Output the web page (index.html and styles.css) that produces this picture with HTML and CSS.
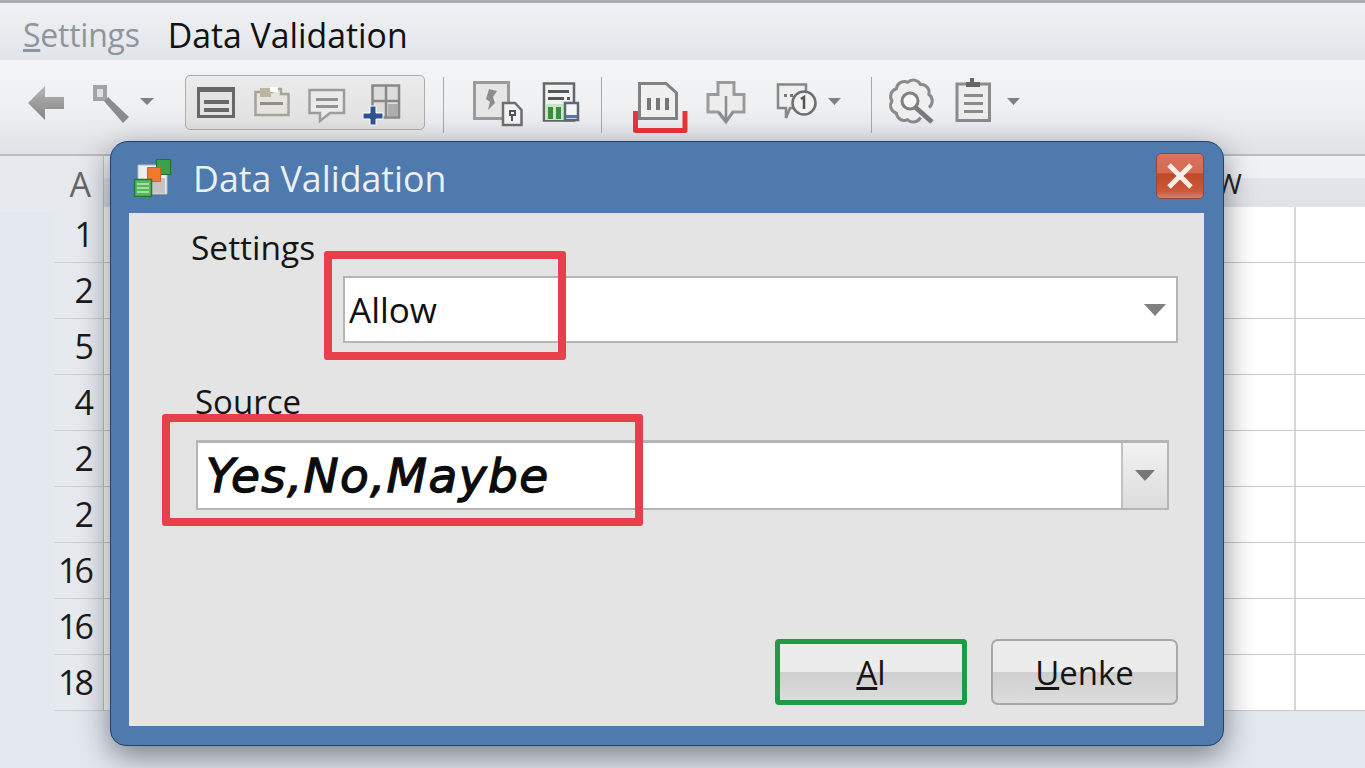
FILE: index.html
```html
<!DOCTYPE html>
<html lang="en">
<head>
<meta charset="utf-8">
<title>Data Validation</title>
<link rel="stylesheet" href="styles.css">
</head>
<body>
<div class="strip"></div>
<header class="menubar">
  <span class="menu-item menu-muted"><u>S</u>ettings</span>
  <span class="menu-item menu-active">Data Validation</span>
</header>
<nav class="toolbar">
  <svg class="ic" width="62" height="60" viewBox="20 75 62 60"><defs><linearGradient id="ga" x1="0" y1="0" x2="0" y2="1"><stop offset="0" stop-color="#b5b5b5"/><stop offset="1" stop-color="#858585"/></linearGradient></defs><path fill="url(#ga)" d="M28 103 45 86V97H64V109H45V120Z"/></svg>
  <svg class="ic" width="52" height="60" viewBox="82 75 52 60"><path fill="#e0e0e0" stroke="#a3a3a3" stroke-width="4" d="M95 87H105V99H95Z"/><path fill="#8c8c8c" d="M104 101 108 97 129 117 123 123Z"/></svg>
  <svg class="ic" width="51" height="60" viewBox="134 75 51 60"><path fill="#808080" d="M140 98H154L147 105Z"/></svg>
  <div class="group">
    <svg class="ic-g" width="59" height="53" viewBox="186 76 59 53"><path fill="#e3e3e3" stroke="#686868" stroke-width="3" d="M198.500 90H233.500V116.500H198.500Z"/><path fill="#686868" d="M197 87H235V92H197ZM204 100H229V104H204ZM204 108H229V112H204Z"/></svg>
    <svg class="ic-g" width="55" height="53" viewBox="245 76 55 53"><path fill="#e6e4df" stroke="#a5a39c" stroke-width="2.500" d="M255.500 92H272V89H281V94H288.500V115H255.500Z"/><path fill="#bdb5a2" d="M260 88H271V97H260Z"/><path fill="#fff" d="M270 87H278V92H270Z"/><path fill="#8f8f8c" d="M260 102H283V105H260Z"/></svg>
    <svg class="ic-g" width="55" height="53" viewBox="300 76 55 53"><path fill="#ebebeb" stroke="#9c9c9c" stroke-width="2.500" d="M309.500 90H344V113H330L320 121V113H309.500Z"/><path fill="#929292" d="M316 98H338V101H316ZM316 105H338V108H316Z"/></svg>
    <svg class="ic-g" width="69" height="53" viewBox="355 76 69 53"><path fill="#dcdcdc" stroke="#888" stroke-width="2.500" d="M372.500 85.500H399V117.500H372.500Z"/><path fill="none" stroke="#888" stroke-width="2.500" d="M386 85V118M372 101H399"/><path fill="#adadad" d="M388 104H398V116H388Z"/><path fill="#2f5591" stroke="#fff" stroke-width="1" d="M370 106H376V113H383V119H376V125H370V119H363V113H370Z"/></svg>
  </div>
  <div class="sep sep-a"></div>
  <svg class="ic" width="83" height="60" viewBox="444 75 83 60"><path fill="#e6e6e6" stroke="#9a9a9a" stroke-width="3" d="M474.500 82.500H508.500V118.500H474.500Z"/><path fill="#8c8c8c" d="M489 89 497 91 493 97 495 103 488 110 490 102 486 99Z"/><path fill="#f3f3f3" stroke="#6f6f6f" stroke-width="2.500" d="M503 103H515L521.500 110V125H503Z"/><path fill="none" stroke="#555" stroke-width="2" d="M510 111H515V115H510ZM512 115V121"/></svg>
  <svg class="ic" width="63" height="60" viewBox="527 75 63 60"><path fill="#f1f1f1" stroke="#62686a" stroke-width="2.500" d="M544 83.500H574V120.500H544Z"/><path fill="#555" d="M548 90H569V93H548ZM548 97H564V100H548ZM567 97H570V100H567Z"/><path fill="#c9e5c7" d="M545 104H564V120H545Z"/><path fill="#3c8d3d" d="M548 107H553V119H548ZM556 107H561V119H556Z"/><path fill="#f3f5f6" stroke="#5c6a75" stroke-width="2.500" d="M565 103H578V120H565Z"/><path fill="#4e7aad" d="M566 115H577V118H566Z"/></svg>
  <div class="sep sep-b"></div>
  <svg class="ic" width="93" height="60" viewBox="602 75 93 60"><path fill="#f0f0f0" stroke="#828282" stroke-width="3" d="M639.500 83.500H666L676.500 93V118.500H639.500Z"/><path fill="#767676" d="M647 98H651V110H647ZM656 98H660V110H656ZM665 98H669V110H665Z"/><path fill="none" stroke="#e8343b" stroke-width="5" stroke-linejoin="round" d="M635.500 111V130.500H685V111"/></svg>
  <svg class="ic" width="65" height="60" viewBox="695 75 65 60"><path fill="#ededed" stroke="#9b9b9b" stroke-width="3" d="M718 82.500H734V94.500H744V112H733L726 122 718 112H708V94.500H718Z"/><path fill="none" stroke="#8c8c8c" stroke-width="2.500" d="M726 96V121M719 112 726 121 733 112"/></svg>
  <svg class="ic" width="90" height="60" viewBox="760 75 90 60"><path fill="#efefef" stroke="#868686" stroke-width="2.500" d="M778 84.500H806V108H790L786 118V108H778Z"/><path fill="#777" d="M784 94H787V97H784ZM790 94H793V97H790Z"/><circle cx="804" cy="103" r="11.500" fill="#f1f1f1" stroke="#6f6f6f" stroke-width="2.500"/><path fill="none" stroke="#555" stroke-width="2.500" d="M801 99 804 97V109"/><path fill="#808080" d="M828 98H841L834.500 105Z"/></svg>
  <div class="sep sep-c"></div>
  <svg class="ic" width="73" height="60" viewBox="872 75 73 60"><path fill="#efefef" stroke="#8a8a8a" stroke-width="3" d="M920.500 117.500A8 8 0 0 1 907.700 119.700A8 8 0 0 1 896.400 113.200A8 8 0 0 1 892 101A8 8 0 0 1 896.400 88.800A8 8 0 0 1 907.700 82.300A8 8 0 0 1 920.500 84.500A8 8 0 0 1 928.900 94.500A8 8 0 0 1 928.900 107.500"/><circle cx="910" cy="101" r="8" fill="#f7f7f7" stroke="#808080" stroke-width="3"/><path stroke="#7b7b7b" stroke-width="5" d="M915 107 932 122"/></svg>
  <svg class="ic" width="85" height="60" viewBox="945 75 85 60"><path fill="#ededed" stroke="#8b8b8b" stroke-width="3" d="M957 84H989.500V120.500H957Z"/><path fill="#666" d="M966 82H970V78H974V82H980V87H966Z"/><path fill="#8a8a8a" d="M964 94H983V97H964ZM964 102H983V105H964ZM964 110H983V113H964Z"/><path fill="#808080" d="M1007 98H1020L1013.500 105Z"/></svg>
</nav>
<main class="sheet">
  <div class="sheet-head">
    <div class="head-gutter"></div>
    <div class="head-corner">A</div>
    <div class="head-col"></div>
    <div class="head-col head-w">W</div>
    <div class="head-col"></div>
  </div>
  <div class="sheet-row"><div class="row-num">1</div><div class="cell"></div><div class="cell cell-last"></div></div>
  <div class="sheet-row"><div class="row-num">2</div><div class="cell"></div><div class="cell cell-last"></div></div>
  <div class="sheet-row"><div class="row-num">5</div><div class="cell"></div><div class="cell cell-last"></div></div>
  <div class="sheet-row"><div class="row-num">4</div><div class="cell"></div><div class="cell cell-last"></div></div>
  <div class="sheet-row"><div class="row-num">2</div><div class="cell"></div><div class="cell cell-last"></div></div>
  <div class="sheet-row"><div class="row-num">2</div><div class="cell"></div><div class="cell cell-last"></div></div>
  <div class="sheet-row"><div class="row-num">16</div><div class="cell"></div><div class="cell cell-last"></div></div>
  <div class="sheet-row"><div class="row-num">16</div><div class="cell"></div><div class="cell cell-last"></div></div>
  <div class="sheet-row"><div class="row-num">18</div><div class="cell"></div><div class="cell cell-last"></div></div>
</main>
<section class="dialog" aria-label="Data Validation">
  <div class="titlebar">
    <svg class="title-icon" width="38" height="39" viewBox="134 158 38 39"><path fill="#ededed" stroke="#b9b9b9" d="M139 165H168V194H139Z"/><path fill="#a9a9a9" d="M153 178H166V193H153Z" opacity=".6"/><path fill="#3da04a" stroke="#1f6d31" d="M157.500 159.500H171.500V174.500H157.500Z"/><path fill="#ee7a2a" stroke="#d75f17" d="M148.500 167.500H161.500V181.500H148.500Z"/><path fill="#58b85c" stroke="#1f7a36" stroke-width="1.500" d="M135.500 179.500H152.500V196.500H135.500Z"/><path stroke="#bfe6bd" stroke-width="1.500" d="M138 184H150M138 188H150M138 192H150"/></svg>
    <span class="title-text">Data Validation</span>
    <button class="close" aria-label="Close"><svg width="28" height="28" viewBox="0 0 28 28"><path stroke="#fbeee8" stroke-width="5" d="M3 3 25 25M25 3 3 25"/></svg></button>
  </div>
  <div class="panel">
    <div class="label label-settings">Settings</div>
    <div class="field field-allow"><span class="field-text">Allow</span><svg class="caret" width="22" height="12" viewBox="0 0 22 12"><path fill="#808080" d="M0 0H22L11 12Z"/></svg></div>
    <div class="label label-source">Source</div>
    <div class="field field-source"><span class="source-text">Yes,No,Maybe</span><div class="drop-btn"><svg width="20" height="11" viewBox="0 0 20 11"><path fill="#777" d="M0 0H20L10 11Z"/></svg></div></div>
    <div class="buttons">
      <button class="btn btn-ok"><u>A</u>l</button>
      <button class="btn btn-cancel"><u>U</u>enke</button>
    </div>
    <div class="mark mark-allow"></div>
    <div class="mark mark-source"></div>
  </div>
</section>
</body>
</html>
```
FILE: styles.css
```css
* { box-sizing: border-box; }
html, body { margin: 0; height: 768px; overflow: hidden; }
body {
  position: relative;
  width: 1365px;
  font-family: "Open Sans", "Noto Sans", sans-serif;
  color: #111;
  background: #e3e7ee;
}
.strip { height: 3px; background: #a9aeb6; }
.menubar {
  height: 57px;
  display: flex;
  align-items: center;
  gap: 28px;
  padding: 6px 0 0 23px;
  background: linear-gradient(#f0f1f4, #e1e5ea);
}
.menu-item { line-height: 44px; }
.menu-muted { font-size: 32px; letter-spacing: -.25px; color: #8f959c; }
.menu-active { font-size: 33.800px; }
.toolbar {
  height: 96px;
  display: flex;
  align-items: flex-start;
  padding: 15px 0 0 20px;
  background: linear-gradient(#f3f4f6 0, #eff0f2 50%, #dfe2e6 100%);
  border-bottom: 2px solid #b9bdc3;
}
.ic, .ic-g { display: block; flex: none; }
.group {
  display: flex;
  width: 240px;
  height: 55px;
  border: 1px solid #adadad;
  border-radius: 5px;
  background: linear-gradient(#ebebeb, #e0e0e0);
}
.sep { width: 1px; height: 56px; margin-top: 2px; background: #a6a8ab; flex: none; }
.sep-a { margin-left: 18px; }
.sep-b { margin-left: 11px; }
.sep-c { margin-left: 21px; }
.sheet { display: flex; flex-direction: column; }
.sheet-head {
  display: grid;
  grid-template-columns: 55px 49px 1108px 83px 70px;
  height: 51px;
  border-bottom: 2px solid #c3c7cd;
}
.head-gutter { background: #e6e9ee; }
.head-corner {
  font-size: 34px;
  line-height: 56px;
  text-align: right;
  padding-right: 12px;
  color: #666;
  background: #e6e9ee;
  border-right: 1px solid #c3c6cb;
}
.head-col { background: linear-gradient(#eff1f3 0, #eff1f3 40%, #e2e5ea 40%, #dfe2e7 100%); }
.head-w { font-size: 28px; line-height: 54px; padding-left: 4px; color: #222; }
.sheet-row {
  display: grid;
  grid-template-columns: 49px 1192px 69px;
  height: 56px;
  margin-left: 55px;
  border-bottom: 2px solid #c8ccd2;
}
.row-num {
  font-size: 34px;
  line-height: 55px;
  letter-spacing: -3px;
  text-align: right;
  padding-right: 12px;
  color: #1a1a1a;
  background: #e6e9ee;
  border-right: 1px solid #bfc2c7;
}
.cell { background: #fff; border-right: 2px solid #d6d6d6; }
.cell-last { border-right: 0; }
.dialog {
  position: absolute;
  left: 110px;
  top: 141px;
  width: 1114px;
  height: 605px;
  display: flex;
  flex-direction: column;
  padding: 0 19px 19px 18px;
  border: 1.500px solid #1f426f;
  border-radius: 18px 18px 16px 16px;
  background: #4e7aad;
  box-shadow: 0 10px 30px rgba(15, 20, 30, .5);
}
.titlebar {
  height: 71px;
  flex: none;
  display: flex;
  align-items: center;
  margin-left: -14px;
  padding-left: 18px;
}
.title-icon { flex: none; }
.title-text { margin-left: 22px; font-size: 35.700px; line-height: 46px; color: #eaf0f6; }
.close {
  margin: -3px 0 0 auto;
  width: 48px;
  height: 46px;
  padding: 0;
  display: flex;
  align-items: center;
  justify-content: center;
  border: 1px solid #8e4a3e;
  border-radius: 5px;
  background: linear-gradient(#d8735c 0, #d46a52 42%, #bf4a28 46%, #c95a3a 85%, #d98070 100%);
}
.close svg { display: block; }
.panel {
  position: relative;
  flex: 1;
  display: flex;
  flex-direction: column;
  padding: 14px 26px 21px 0;
  background: #e4e4e4;
}
.label { line-height: 40px; color: #151515; }
.label-settings { margin-left: 62px; font-size: 33.500px; }
.label-source { margin: 39px 0 0 66px; font-size: 33px; }
.field {
  display: flex;
  align-items: center;
  background: #fff;
  border: 2px solid #b5b5b5;
}
.field-allow { height: 67px; margin: 9px 0 0 214px; padding: 0 10px 0 4px; }
.field-text { font-size: 35px; }
.caret { margin-left: auto; }
.field-source { height: 70px; margin: 18px 9px 0 67px; padding-left: 8px; border-top-width: 3px; }
.source-text {
  font-family: "DejaVu Sans", sans-serif;
  font-style: italic;
  font-size: 47px;
  -webkit-text-stroke: 1.300px #0c0c0c;
  letter-spacing: 1.400px;
  color: #0c0c0c;
}
.drop-btn {
  margin-left: auto;
  width: 46px;
  align-self: stretch;
  display: flex;
  align-items: center;
  justify-content: center;
  border-left: 2px solid #c2c2c2;
  background: linear-gradient(#f2f2f2, #dcdcdc);
}
.buttons { margin-top: auto; display: flex; justify-content: flex-end; gap: 24px; }
.btn {
  height: 66px;
  padding: 0;
  font: 33px/1 "Open Sans", sans-serif;
  color: #151515;
  background: linear-gradient(#ececec 0, #ececec 50%, #cfcfcf 50%, #dcdcdc 100%);
}
.btn-ok { width: 192px; border: 5px solid #1f9a45; border-radius: 4px; }
.btn-cancel { width: 187px; border: 2px solid #a8a8a8; border-radius: 7px; }
.mark {
  position: absolute;
  border: 8px solid #e8404a;
  border-radius: 3px;
  pointer-events: none;
}
.mark-allow { left: 195px; top: 38px; width: 242px; height: 109px; }
.mark-source { left: 33px; top: 201px; width: 481px; height: 112px; }
```
